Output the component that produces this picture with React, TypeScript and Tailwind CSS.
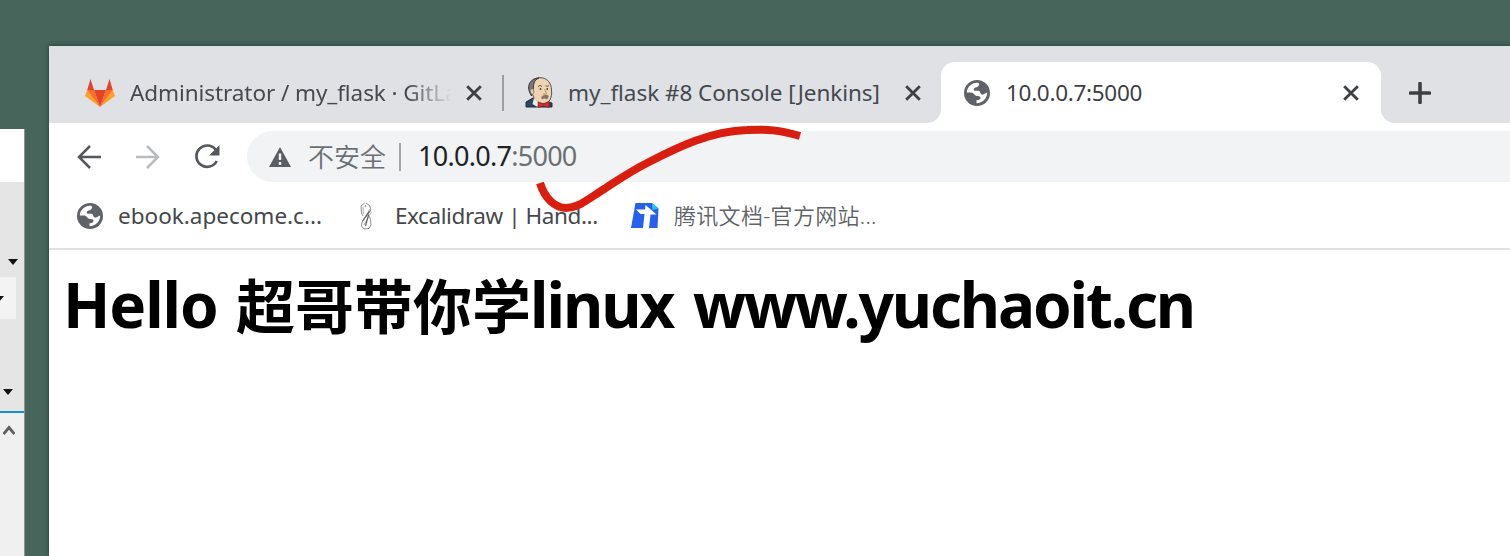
import React from 'react';

const LATIN = "font-['Noto_Sans','Noto_Sans_CJK_SC',sans-serif]";

function Globe({ className = '' }: { className?: string }) {
  return (
    <svg viewBox="0 0 26 26" className={`h-[26px] w-[26px] shrink-0 ${className}`}>
      <circle cx="13" cy="13" r="13" fill="#5f6367" />
      <path
        d="M2.800 12.500 C3 7 7.500 2.900 13 2.700 C15.500 2.800 15.800 4.500 14.500 5.800 C13.500 6.800 13 7.300 11.500 7.600 C9.800 8 9.600 9.500 10 10.800 L14.500 10.800 C16.500 11 16 14 18 14.600 C20.500 15 21 12.800 23.200 12.600 C23.300 18.500 18.500 23.300 12.500 23.200 L12.500 20.300 C14.500 20.200 16.800 19.500 16.500 17.500 C16.200 16 14.500 16 13 15.900 C10 15.700 10.300 12.800 7.500 12.500 Z"
        fill="#fff"
      />
    </svg>
  );
}

function Close() {
  return (
    <svg viewBox="0 0 16 16" className="h-4 w-4 shrink-0" stroke="#3c4043" strokeWidth="2.8" fill="none">
      <path d="M1.200 1.200 L14.800 14.800 M14.800 1.200 L1.200 14.800" />
    </svg>
  );
}

function GitLab() {
  return (
    <svg viewBox="0 0 30 28" className="h-7 w-[30px] shrink-0">
      <path d="M5.500 0 L2.200 11 H9 Z M24.500 0 L21 11 H27.800 Z" fill="#e24329" />
      <path d="M2.200 11 L0 17 L15 28 Z M27.800 11 L30 17 L15 28 Z" fill="#fca326" />
      <path d="M2.200 11 H9 L15 28 Z M27.800 11 H21 L15 28 Z" fill="#fc6d26" />
      <path d="M9 11 H21 L15 28 Z" fill="#e24329" />
    </svg>
  );
}

function Jenkins() {
  return (
    <svg viewBox="0 0 28 31" className="h-[31px] w-7 shrink-0">
      <path d="M1 30 V25 L8 21 L20 24 L27 26 V30 Z" fill="#264a64" stroke="#222d38" strokeWidth="1" />
      <path d="M6 15 C3 7 8 0.700 15 0.700 C22 0.500 26.500 6 26.500 13 C27.500 21 24 27 18 26.500 C12 26 9 23 8 18 Z" fill="#efd4b4" stroke="#5b5148" strokeWidth="1" />
      <path d="M4.500 15 C1.500 8 6 1 14 1 C9.500 3 8.500 6 8.500 10 L8 13 L6.500 19 Z" fill="#77777b" stroke="#38373a" strokeWidth="1" />
      <path d="M5.500 13 Q8 10 8.800 14 Q8.800 18 6.500 17" fill="#efd4b4" stroke="#6b5b4f" strokeWidth=".7" />
      <path d="M13 9.500 Q15 7.800 17 9.300 M20.500 9 L24 9" fill="none" stroke="#6d5b4e" strokeWidth="1" />
      <circle cx="15.500" cy="12" r=".9" fill="#4b3d37" />
      <circle cx="22.300" cy="12" r=".9" fill="#4b3d37" />
      <path d="M19.500 12 L21.500 17 L18 17" fill="none" stroke="#a98469" strokeWidth=".8" />
      <path d="M16 20.500 Q19 16 24 19 L22 22.500 Q19 20.500 17 22.500 Z" fill="#8c7465" />
      <path d="M9 21 L14 26 L12.500 30 L7.500 27 Z" fill="#f4eee8" />
      <path d="M13 25 L18 27 L24 24.500 V30.500 L18.500 29 L13 30.500 Z" fill="#d92c2c" stroke="#7d2020" strokeWidth=".6" />
    </svg>
  );
}

function Excalidraw() {
  return (
    <svg viewBox="0 0 14 28" className="h-7 w-3.5 shrink-0" fill="none" stroke="#8f8f8f" strokeWidth="1">
      <path d="M5.500 1 L2 4 L2.500 11 L4 14 M7 1 L11 4 L11.500 9 L3 20 L2.500 24 L5 27 L10 26.500 L12 23 L11.500 17 L9 12" />
      <path d="M11 7 L4.500 18 M12.500 10 L5 23 M4 5 L4.500 12" stroke="#b5b5b5" />
      <path d="M10.500 9 L3.500 19 M9.500 13 L6.500 24" stroke="#5c5c5c" strokeWidth="1.100" />
      <circle cx="6.500" cy="4" r=".6" />
    </svg>
  );
}

function TencentDocs() {
  return (
    <svg viewBox="0 0 28 25" className="h-[25px] w-7 shrink-0">
      <path d="M4.500 0 H21 L27.500 5.500 L26.500 25 H0 Z" fill="#2860ee" />
      <path d="M21 0 L27.500 5.500 L21.500 7 Z" fill="#16cfe8" />
      <path d="M5 6.500 H14 L14.500 2 L25.500 11.500 H19.500 L18 25 H12 L13.500 11 H9.500 Z" fill="#fff" />
    </svg>
  );
}

function Caret({ className = '' }: { className?: string }) {
  return (
    <svg viewBox="0 0 10 6" className={`block h-1.5 w-2.5 ${className}`}>
      <path d="M0 0 H10 L5 6 Z" fill="#111" />
    </svg>
  );
}

function SideWindow() {
  return (
    <aside className="mt-[129px] h-[427px] w-[25px] shrink-0 overflow-hidden border-r border-[#8b9692] bg-[#f0f0f0]">
      <div className="h-[53px] bg-white" />
      <div className="h-[229px] bg-[#e6e5e5] pt-[77px]">
        <Caret className="ml-2" />
        <div className="mt-[12px] h-[42px] w-4 bg-[#f3f3f3] pt-[19px]">
          <Caret className="-ml-[6px]" />
        </div>
        <Caret className="ml-[3px] mt-[70px]" />
      </div>
      <div className="h-0.5 bg-[#1590dd]" />
      <svg viewBox="0 0 12 10" className="ml-[3px] mt-[12px] h-2.5 w-3" fill="none" stroke="#606060" strokeWidth="2.800">
        <path d="M0.500 9 L6 2.500 L11.500 9" />
      </svg>
    </aside>
  );
}

function TabStrip() {
  return (
    <div className="flex h-[77px] bg-[#dfe1e5] pt-4 text-[22.5px] text-[#45494d]">
      <div className="flex h-[61px] w-[453px] shrink-0 items-center pl-9">
        <GitLab />
        <span className="ml-[15px] w-[322px] overflow-hidden whitespace-nowrap tracking-[-0.08px] [mask-image:linear-gradient(to_right,#000_86%,transparent)]">
          Administrator / my_flask · GitLab
        </span>
        <span className="ml-[14px]"><Close /></span>
      </div>
      <div className="mt-[13px] h-[36px] w-0.5 bg-[#9b9fa4]" />
      <div className="flex h-[61px] w-[437px] shrink-0 items-center rounded-br-[14px] pl-[21px]">
        <Jenkins />
        <span className="ml-[15px] w-[322px] whitespace-nowrap tracking-[-0.04px]">my_flask #8 Console [Jenkins]</span>
        <span className="ml-[15px]"><Close /></span>
      </div>
      <div className="relative flex h-[61px] w-[440px] shrink-0 items-center rounded-t-[14px] bg-white pl-[23px]">
        <span className="absolute -left-[14px] bottom-0 h-[14px] w-[14px] bg-[radial-gradient(circle_at_0_0,#dfe1e5_13.5px,#fff_14.5px)]" />
        <span className="absolute -right-[14px] bottom-0 h-[14px] w-[14px] bg-[radial-gradient(circle_at_100%_0,#dfe1e5_13.5px,#fff_14.5px)]" />
        <Globe />
        <span className="ml-4 w-[321px] whitespace-nowrap tracking-[-0.3px] text-[#3c4043]">10.0.0.7:5000</span>
        <span className="ml-4"><Close /></span>
      </div>
      <svg viewBox="0 0 22 22" className="ml-7 mt-5 h-[22px] w-[22px] shrink-0" stroke="#3c4043" strokeWidth="3.600" strokeLinecap="round">
        <path d="M11 1.500 V20.500 M1.500 11 H20.500" />
      </svg>
    </div>
  );
}

function Toolbar() {
  return (
    <div className="flex h-[67px] items-center pl-7">
      <svg viewBox="0 0 24 24" className="h-6 w-6 shrink-0" fill="none" stroke="#54585c" strokeWidth="2.500">
        <path d="M24 12 H2 M13 1 L2 12 L13 23" />
      </svg>
      <svg viewBox="0 0 24 24" className="ml-[35px] h-6 w-6 shrink-0" fill="none" stroke="#b9bbbd" strokeWidth="2.500">
        <path d="M0 12 H22 M11 1 L22 12 L11 23" />
      </svg>
      <svg viewBox="0 0 26 26" className="ml-[34px] h-[26px] w-[26px] shrink-0">
        <path d="M21.500 5.500 A10.700 10.700 0 1 0 22.700 17" fill="none" stroke="#54585c" strokeWidth="2.700" />
        <path d="M25.500 1 V11.500 H15 Z" fill="#54585c" />
      </svg>
      <div className="ml-[27px] flex h-[51px] flex-1 items-center rounded-l-full bg-[#f1f3f4] pl-[22px] text-[27px]">
        <svg viewBox="0 0 22 20" className="h-5 w-[22px] shrink-0">
          <path d="M11 0 L22 20 H0 Z" fill="#5a5e62" />
          <path d="M11 6.500 V13 M11 15 V18" stroke="#f1f3f4" strokeWidth="2.400" />
        </svg>
        <span className="-mt-[3px] ml-[17px] w-[79px] whitespace-nowrap font-['Noto_Sans_CJK_SC',sans-serif] text-[26px] font-[350] text-[#6b6f73]">不安全</span>
        <div className="ml-[12px] h-7 w-0.5 bg-[#a4a7aa]" />
        <span className="-mt-px ml-[17px] whitespace-nowrap tracking-[-0.72px] text-[#202124]">
          10.0.0.7<span className="text-[#6b6f73]">:5000</span>
        </span>
      </div>
    </div>
  );
}

function Bookmarks() {
  return (
    <div className="flex h-[60px] items-center border-b-2 border-[#dfe1e3] pb-[7px] pl-7 text-[22.5px] text-[#45484b]">
      <Globe />
      <span className="ml-[15px] w-[204px] whitespace-nowrap">ebook.apecome.c...</span>
      <span className="ml-[37px]"><Excalidraw /></span>
      <span className="ml-[22px] w-[204px] whitespace-nowrap tracking-[-0.42px]">Excalidraw | Hand...</span>
      <span className="ml-[32px]"><TencentDocs /></span>
      <span className="ml-[15px] whitespace-nowrap text-[22px] font-[350] tracking-[0.3px] text-[#606366]">腾讯文档-官方网站...</span>
    </div>
  );
}

export default function App() {
  return (
    <div className={`relative flex h-[556px] w-[1510px] overflow-hidden bg-[#47655b] ${LATIN}`}>
      <SideWindow />
      <main className="ml-6 mt-[46px] h-[510px] flex-1 overflow-hidden bg-white shadow-[0_0_5px_rgba(20,35,30,0.65)]">
        <TabStrip />
        <Toolbar />
        <Bookmarks />
        <h1 className="mt-[9px] flex h-[90px] items-center pl-[14px] text-[62px] font-bold leading-none text-black">
          <span className="w-[173px] whitespace-nowrap tracking-[-1.1px]">Hello</span>
          <span className="mt-1 w-[294px] whitespace-nowrap text-[59px]">超哥带你学</span>
          <span className="w-[163px] whitespace-nowrap tracking-[-2px]">linux</span>
          <span className="whitespace-nowrap tracking-[-2.15px]">www.yuchaoit.cn</span>
        </h1>
      </main>
      <svg viewBox="0 0 280 100" className="absolute left-[530px] top-[120px] h-[100px] w-[280px]" fill="none" stroke="#d91e10" strokeWidth="8">
        <path d="M10 63 C15 79 25 87.500 36 88 C48 88 55 81 75 68.500 C94 56 101 51 119 42 C148 27 181 11 217 10 C237 9 249 10 270 16" />
      </svg>
    </div>
  );
}
